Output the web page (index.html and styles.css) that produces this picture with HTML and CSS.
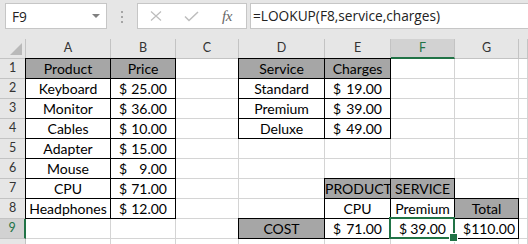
FILE: index.html
```html
<!DOCTYPE html>
<html lang="en">
  <head>
    <meta charset="UTF-8" />
    <title>Book1 - LOOKUP</title>
    <link rel="stylesheet" href="styles.css">
  </head>
  <body>
    <!-- Formula Bar -->
    <div class="formula-bar">
      <div class="name-box">
        <span>F9</span>
        <span class="caret"></span>
      </div>
      <div class="grip"><i></i><i></i><i></i></div>
      <div class="fx-buttons">
        <svg class="btn-x" width="12" height="10" viewBox="0 0 12 10">
          <path d="M1 0.5 L11 9.5 M11 0.5 L1 9.5" stroke="#bdbdbd" stroke-width="1.2" fill="none" />
        </svg>
        <svg class="btn-ok" width="15" height="11" viewBox="0 0 15 11">
          <path d="M1 5.5 L5 9.5 L14 1" stroke="#bdbdbd" stroke-width="1.5" fill="none" />
        </svg>
        <span class="btn-fx">fx</span>
      </div>
      <div class="formula-input">=LOOKUP(F8,service,charges)</div>
    </div>

    <!-- Sheet -->
    <div class="sheet">
      <!-- column headers -->
      <div class="c ch corner"><span class="tri"></span></div>
      <div class="c ch">A</div>
      <div class="c ch">B</div>
      <div class="c ch">C</div>
      <div class="c ch">D</div>
      <div class="c ch">E</div>
      <div class="c ch sel">F</div>
      <div class="c ch">G</div>
      <div class="c ch"></div>

      <!-- row 1 -->
      <div class="c rh">1</div>
      <div class="c bx hd ctr">Product</div>
      <div class="c bx hd ctr">Price</div>
      <div class="c"></div>
      <div class="c bx hd ctr">Service</div>
      <div class="c bx hd ctr">Charges</div>
      <div class="c"></div>
      <div class="c"></div>
      <div class="c"></div>

      <!-- row 2 -->
      <div class="c rh">2</div>
      <div class="c bx ctr">Keyboard</div>
      <div class="c bx acc"><span>$</span><span>25.00</span></div>
      <div class="c"></div>
      <div class="c bx ctr">Standard</div>
      <div class="c bx acc"><span>$</span><span>19.00</span></div>
      <div class="c"></div>
      <div class="c"></div>
      <div class="c"></div>

      <!-- row 3 -->
      <div class="c rh">3</div>
      <div class="c bx ctr">Monitor</div>
      <div class="c bx acc"><span>$</span><span>36.00</span></div>
      <div class="c"></div>
      <div class="c bx ctr">Premium</div>
      <div class="c bx acc"><span>$</span><span>39.00</span></div>
      <div class="c"></div>
      <div class="c"></div>
      <div class="c"></div>

      <!-- row 4 -->
      <div class="c rh">4</div>
      <div class="c bx ctr">Cables</div>
      <div class="c bx acc"><span>$</span><span>10.00</span></div>
      <div class="c"></div>
      <div class="c bx ctr">Deluxe</div>
      <div class="c bx acc"><span>$</span><span>49.00</span></div>
      <div class="c"></div>
      <div class="c"></div>
      <div class="c"></div>

      <!-- row 5 -->
      <div class="c rh">5</div>
      <div class="c bx ctr">Adapter</div>
      <div class="c bx acc"><span>$</span><span>15.00</span></div>
      <div class="c"></div>
      <div class="c"></div>
      <div class="c"></div>
      <div class="c"></div>
      <div class="c"></div>
      <div class="c"></div>

      <!-- row 6 -->
      <div class="c rh">6</div>
      <div class="c bx ctr">Mouse</div>
      <div class="c bx acc"><span>$</span><span>9.00</span></div>
      <div class="c"></div>
      <div class="c"></div>
      <div class="c"></div>
      <div class="c"></div>
      <div class="c"></div>
      <div class="c"></div>

      <!-- row 7 -->
      <div class="c rh">7</div>
      <div class="c bx ctr">CPU</div>
      <div class="c bx acc"><span>$</span><span>71.00</span></div>
      <div class="c"></div>
      <div class="c"></div>
      <div class="c bx hd ctr">PRODUCT</div>
      <div class="c bx hd ctr">SERVICE</div>
      <div class="c"></div>
      <div class="c"></div>

      <!-- row 8 -->
      <div class="c rh">8</div>
      <div class="c bx ctr">Headphones</div>
      <div class="c bx acc"><span>$</span><span>12.00</span></div>
      <div class="c"></div>
      <div class="c"></div>
      <div class="c bx ctr">CPU</div>
      <div class="c bx ctr">Premium</div>
      <div class="c bx hd ctr">Total</div>
      <div class="c"></div>

      <!-- row 9 -->
      <div class="c rh sel">9</div>
      <div class="c"></div>
      <div class="c"></div>
      <div class="c"></div>
      <div class="c bx hd ctr">COST</div>
      <div class="c bx acc"><span>$</span><span>71.00</span></div>
      <div class="c bx acc active"><span>$</span><span>39.00</span></div>
      <div class="c bx acc"><span>$</span><span>110.00</span></div>
      <div class="c"></div>

      <!-- row 10 (only its top edge shows) -->
      <div class="c rh"></div>
      <div class="c"></div>
      <div class="c"></div>
      <div class="c"></div>
      <div class="c"></div>
      <div class="c"></div>
      <div class="c"></div>
      <div class="c"></div>
      <div class="c"></div>
    </div>
  </body>
</html>
```

FILE: styles.css
```css
/* Reset */
* {
  margin: 0;
  padding: 0;
  box-sizing: border-box;
}
body {
  background-color: #e6e6e6;
  font-family: Lato, "Open Sans", sans-serif;
  color: #000;
  overflow: hidden;
}

/* Formula Bar */
.formula-bar {
  display: flex;
  align-items: flex-start;
  height: 39px;
  padding: 3px 0 0 5px;
}
.name-box {
  width: 102px;
  height: 26px;
  background-color: #fff;
  border: 1px solid #c6c6c6;
  display: flex;
  align-items: center;
  justify-content: space-between;
  padding: 0 6px 0 6px;
  font-family: "Open Sans", sans-serif;
  font-size: 13.7px;
  color: #222;
}
.caret {
  width: 0;
  height: 0;
  border-left: 4px solid transparent;
  border-right: 4px solid transparent;
  border-top: 4px solid #808080;
}
.grip {
  width: 30px;
  height: 26px;
  display: flex;
  flex-direction: column;
  align-items: center;
  gap: 3px;
  padding-top: 8px;
}
.grip i {
  width: 2px;
  height: 2px;
  background-color: #a5a5a5;
}
.fx-buttons {
  width: 110px;
  height: 26px;
  background-color: #fff;
  border: 1px solid #c6c6c6;
  display: flex;
  align-items: center;
  padding-left: 12px;
}
.btn-ok {
  margin-left: 22px;
}
.btn-fx {
  margin-left: 23px;
  font-family: "Liberation Serif", serif;
  font-style: italic;
  font-size: 15px;
  color: #666;
  letter-spacing: -0.5px;
}
.formula-input {
  flex: 1;
  height: 26px;
  margin-left: 3px;
  background-color: #fff;
  border: 1px solid #c6c6c6;
  border-right: none;
  padding-left: 2px;
  font-family: "Open Sans", sans-serif;
  font-size: 13.7px;
  line-height: 23px;
  color: #222;
  white-space: nowrap;
}

/* Sheet grid */
.sheet {
  display: grid;
  grid-template-columns: 26px 85px 65px 63px 86px 66px 64px 64px 1fr;
  grid-auto-rows: 20px;
}
.c {
  position: relative;
  background-color: #fff;
  border-right: 1px solid #d4d4d4;
  border-bottom: 1px solid #d4d4d4;
  font-size: 14px;
  line-height: 19px;
  white-space: nowrap;
}
.ctr {
  text-align: center;
}
.acc {
  display: flex;
  justify-content: space-between;
  padding: 0 8px 0 8px;
}

/* headers */
.ch,
.rh {
  background-color: #e6e6e6;
  border-right-color: #c3c3c3;
  border-bottom-color: #c3c3c3;
  color: #333;
  font-size: 12.5px;
  line-height: 18px;
  text-align: center;
}
.ch.sel {
  background-color: #d2d2d2;
  color: #217346;
  border-bottom: 2px solid #217346;
}
.rh.sel {
  background-color: #d2d2d2;
  color: #217346;
  border-right: 2px solid #217346;
}
.corner .tri {
  position: absolute;
  right: 3px;
  bottom: 3px;
  width: 0;
  height: 0;
  border-left: 12px solid transparent;
  border-bottom: 12px solid #b9b9b9;
}

/* table cells with black borders */
.bx {
  border-right-color: #000;
  border-bottom-color: #000;
  box-shadow: -1px 0 0 #000, 0 -1px 0 #000, -1px -1px 0 #000;
}
.hd {
  background-color: #a6a6a6;
}

/* active cell */
.active::after {
  content: "";
  position: absolute;
  left: -2px;
  top: -2px;
  right: -1px;
  bottom: -1px;
  border: 2px solid #217346;
  z-index: 2;
}
.active::before {
  content: "";
  position: absolute;
  right: -4px;
  bottom: -4px;
  width: 7px;
  height: 7px;
  background-color: #217346;
  border: 1px solid #fff;
  z-index: 3;
}
```
